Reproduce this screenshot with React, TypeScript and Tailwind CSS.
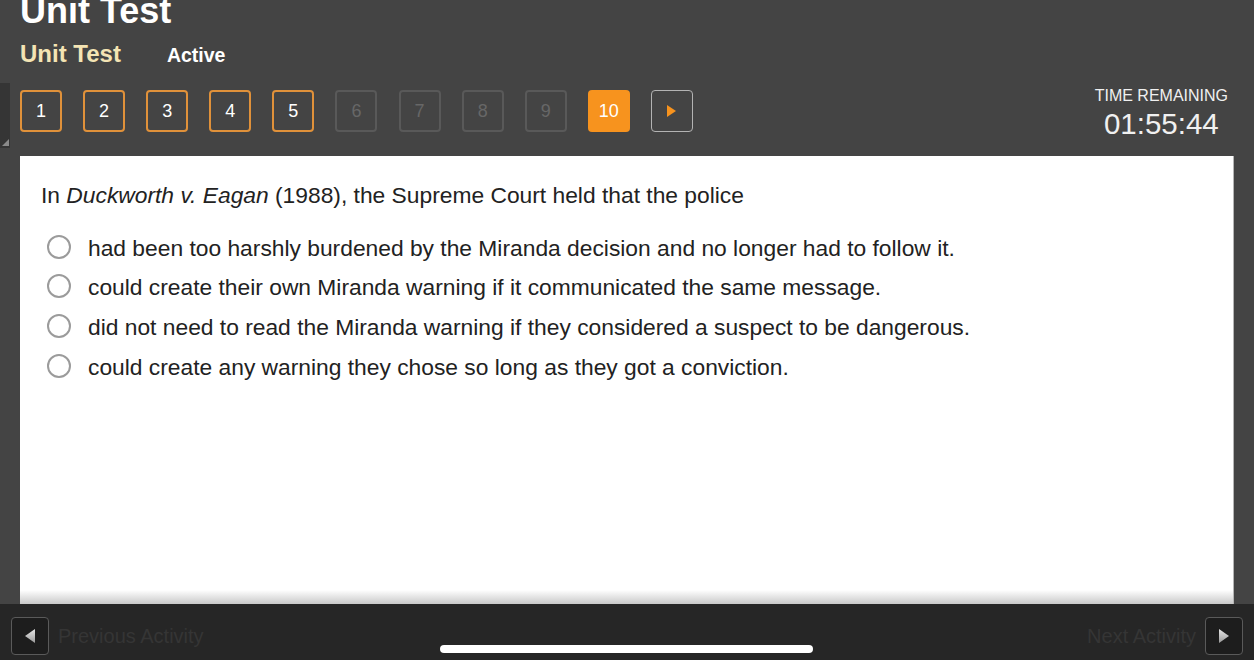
import React from "react";

const answers = [
  "had been too harshly burdened by the Miranda decision and no longer had to follow it.",
  "could create their own Miranda warning if it communicated the same message.",
  "did not need to read the Miranda warning if they considered a suspect to be dangerous.",
  "could create any warning they chose so long as they got a conviction.",
];

function QuestionButton({ n, state }: { n: number; state: "done" | "locked" | "current" }) {
  if (state === "current") {
    return (
      <div className="flex h-[42px] w-[42px] items-center justify-center rounded-[4px] bg-[#f7931e] text-[18px] text-white">
        {n}
      </div>
    );
  }
  return (
    <div
      className={
        state === "done"
          ? "flex h-[42px] w-[42px] items-center justify-center rounded-[4px] border-2 border-[#e0913a] text-[18px] text-white"
          : "flex h-[42px] w-[42px] items-center justify-center rounded-[4px] border-2 border-[#595959] text-[18px] text-[#676767]"
      }
    >
      {n}
    </div>
  );
}

function NavButton({ dir }: { dir: "left" | "right" }) {
  return (
    <div className="flex h-[38px] w-[38px] items-center justify-center rounded-[4px] border-[1.5px] border-[#5a5a5a] bg-[#1d1d1d]">
      <svg width="10" height="14" viewBox="0 0 10 14">
        <defs>
          <linearGradient id={`g-${dir}`} x1="0" y1="0" x2="0" y2="1">
            <stop offset="0" stopColor="#e6e6e6" />
            <stop offset="1" stopColor="#9a9a9a" />
          </linearGradient>
        </defs>
        <polygon points={dir === "left" ? "10,0 10,14 0,7" : "0,0 0,14 10,7"} fill={`url(#g-${dir})`} />
      </svg>
    </div>
  );
}

export default function App() {
  return (
    <div className="relative flex h-[660px] w-full flex-col overflow-hidden bg-[#444444] font-['Liberation_Sans',Arial,sans-serif]">
      {/* side panel handle */}
      <div className="absolute left-0 top-[83px] h-[65px] w-[10px] bg-[#353535]">
        <svg className="absolute bottom-[2px] right-[1px]" width="7" height="7" viewBox="0 0 7 7">
          <polygon points="7,0 7,7 0,7" fill="#8a8a8a" />
        </svg>
      </div>

      {/* header */}
      <div className="h-[156px] shrink-0">
        <h1 className="mt-[-7px] pl-5 text-[36px] font-bold leading-[36px] text-white">Unit Test</h1>
        <div className="mt-[13px] flex items-baseline gap-[46px] pl-5">
          <span className="text-[24px] font-bold leading-[24px] text-[#f4e4b4]">Unit Test</span>
          <span className="text-[19.5px] font-bold leading-[20px] text-white">Active</span>
        </div>
        <div className="mt-[24px] flex items-start pl-5 pr-[26px]">
          <div className="flex gap-[21.1px]">
            {[1, 2, 3, 4, 5].map((n) => (
              <QuestionButton key={n} n={n} state="done" />
            ))}
            {[6, 7, 8, 9].map((n) => (
              <QuestionButton key={n} n={n} state="locked" />
            ))}
            <QuestionButton n={10} state="current" />
            <div className="flex h-[42px] w-[42px] items-center justify-center rounded-[4px] border-[1.5px] border-[#b3b3b3]">
              <svg width="9" height="12" viewBox="0 0 9 12">
                <polygon points="0,0 0,12 9,6" fill="#f7931e" />
              </svg>
            </div>
          </div>
          <div className="ml-auto mt-[-2px] flex flex-col items-center text-[#f0f0f0]">
            <div className="text-[16px] leading-[16px]">TIME REMAINING</div>
            <div className="mt-[5px] text-[29.5px] leading-[29px]">01:55:44</div>
          </div>
        </div>
      </div>

      {/* question panel */}
      <div className="mx-5 flex flex-1 flex-col border-r border-[#b5b5b5] bg-white">
        <p className="pl-[21px] pt-[28px] text-[22.8px] leading-[22.8px] text-[#222222]">
          In <i>Duckworth v. Eagan</i> (1988), the Supreme Court held that the police
        </p>
        <div className="mt-[20px] flex flex-col">
          {answers.map((a) => (
            <label key={a} className="flex h-[39.7px] items-center gap-[17px] pl-[27px]">
              <span className="h-6 w-6 shrink-0 rounded-full border-2 border-[#9b9b9b] bg-white" />
              <span className="mt-[3px] text-[22.8px] leading-[22.8px] text-[#222222]">{a}</span>
            </label>
          ))}
        </div>
        <div className="mt-auto h-[14px] bg-gradient-to-b from-white to-[#c9c9c9]" />
      </div>

      {/* footer */}
      <div className="relative flex h-[56px] shrink-0 items-start justify-between bg-[#262626] px-[11px] pt-[13px]">
        <div className="flex items-center gap-[9px]">
          <NavButton dir="left" />
          <span className="text-[20px] text-[#353535]">Previous Activity</span>
        </div>
        <div className="flex items-center gap-[9px]">
          <span className="text-[20px] text-[#353535]">Next Activity</span>
          <NavButton dir="right" />
        </div>
        <div className="absolute bottom-[7px] left-[440px] h-[8px] w-[373px] rounded-full bg-white" />
      </div>
    </div>
  );
}
